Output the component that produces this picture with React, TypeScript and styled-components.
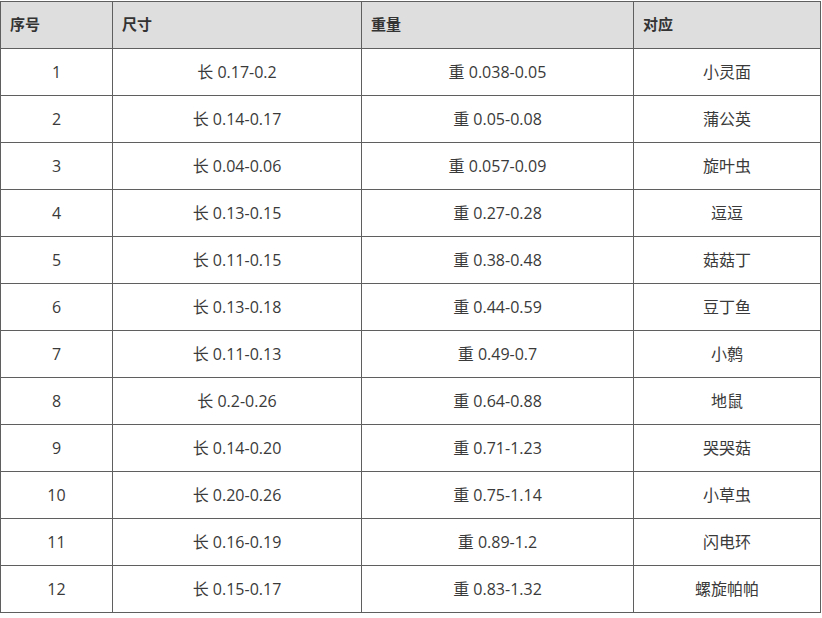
import styled, { createGlobalStyle } from 'styled-components';

const GlobalStyle = createGlobalStyle`
  html, body {
    margin: 0;
    padding: 0;
    background: #fff;
  }
  body {
    font-family: "Open Sans", "Noto Sans CJK SC", "Noto Sans", sans-serif;
    color: #333;
  }
`;

const Table = styled.table`
  width: 820px;
  margin-top: 1px;
  border-collapse: collapse;
  table-layout: fixed;
  line-height: 20px;
`;

const HeadCell = styled.th`
  height: 44px;
  padding: 0 9px 2px;
  background: #dedede;
  border: 1px solid #5f5f5f;
  text-align: left;
  font-size: 15px;
  font-weight: 700;
  color: #333;
`;

const Cell = styled.td`
  height: 45px;
  padding: 0 8px 1px;
  border: 1px solid #5f5f5f;
  text-align: center;
  font-size: 16px;
  color: #3a3a3a;
`;

interface Row {
  size: string;
  weight: string;
  name: string;
}

const rows: Row[] = [
  { size: '长 0.17-0.2', weight: '重 0.038-0.05', name: '小灵面' },
  { size: '长 0.14-0.17', weight: '重 0.05-0.08', name: '蒲公英' },
  { size: '长 0.04-0.06', weight: '重 0.057-0.09', name: '旋叶虫' },
  { size: '长 0.13-0.15', weight: '重 0.27-0.28', name: '逗逗' },
  { size: '长 0.11-0.15', weight: '重 0.38-0.48', name: '菇菇丁' },
  { size: '长 0.13-0.18', weight: '重 0.44-0.59', name: '豆丁鱼' },
  { size: '长 0.11-0.13', weight: '重 0.49-0.7', name: '小鹩' },
  { size: '长 0.2-0.26', weight: '重 0.64-0.88', name: '地鼠' },
  { size: '长 0.14-0.20', weight: '重 0.71-1.23', name: '哭哭菇' },
  { size: '长 0.20-0.26', weight: '重 0.75-1.14', name: '小草虫' },
  { size: '长 0.16-0.19', weight: '重 0.89-1.2', name: '闪电环' },
  { size: '长 0.15-0.17', weight: '重 0.83-1.32', name: '螺旋帕帕' },
];

export default function App() {
  return (
    <>
      <GlobalStyle />
      <Table>
        <colgroup>
          <col style={{ width: 112 }} />
          <col style={{ width: 249 }} />
          <col style={{ width: 272 }} />
          <col style={{ width: 187 }} />
        </colgroup>
        <thead>
          <tr>
            <HeadCell>序号</HeadCell>
            <HeadCell>尺寸</HeadCell>
            <HeadCell>重量</HeadCell>
            <HeadCell>对应</HeadCell>
          </tr>
        </thead>
        <tbody>
          {rows.map((r, i) => (
            <tr key={i}>
              <Cell>{i + 1}</Cell>
              <Cell>{r.size}</Cell>
              <Cell>{r.weight}</Cell>
              <Cell>{r.name}</Cell>
            </tr>
          ))}
        </tbody>
      </Table>
    </>
  );
}
